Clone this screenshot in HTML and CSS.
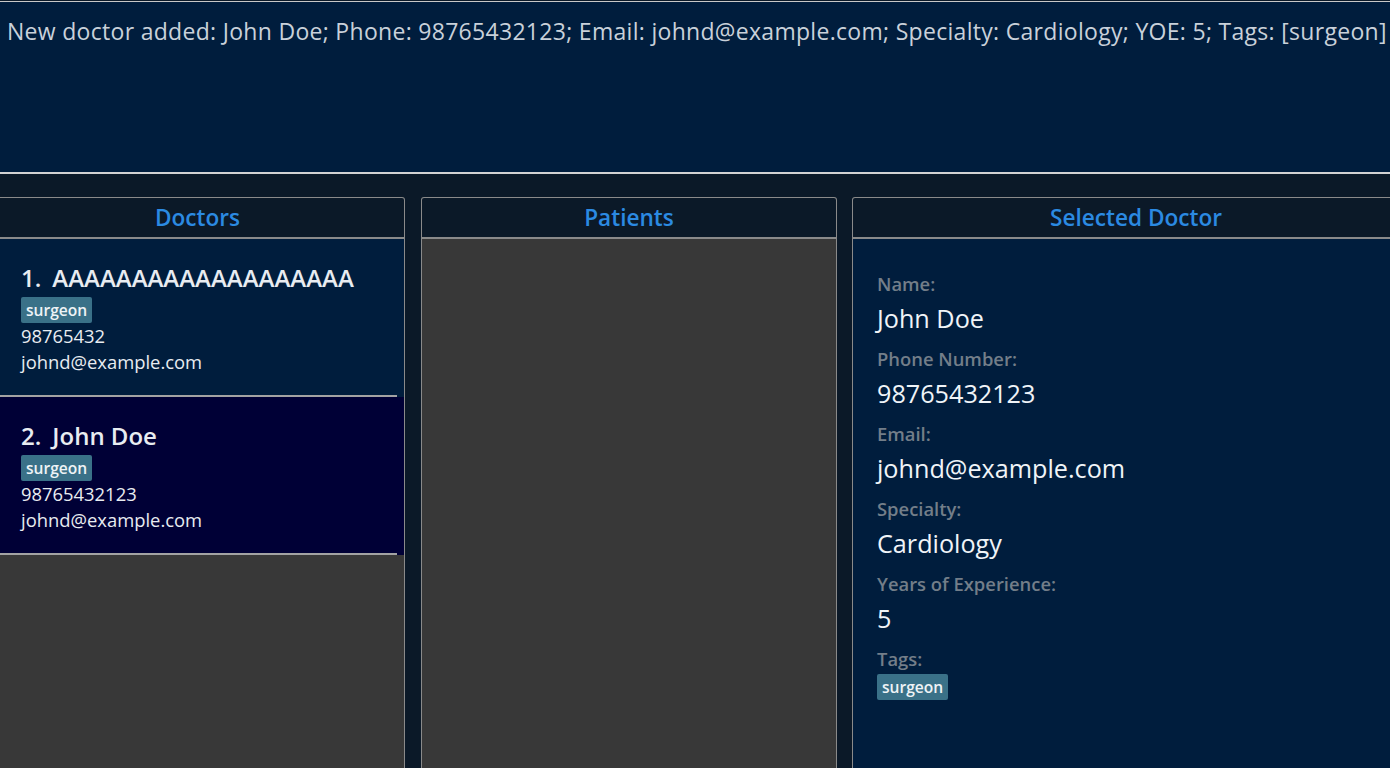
FILE: index.html
```html
<!DOCTYPE html>
<html>
<head>
<meta charset="utf-8">
<link rel="stylesheet" href="styles.css">
</head>
<body>
<div class="result">New doctor added: John Doe; Phone: 98765432123; Email: johnd@example.com; Specialty: Cardiology; YOE: 5; Tags: [surgeon]</div>
<div class="panels">
  <section class="panel doctors">
    <header class="panel-head">Doctors</header>
    <div class="panel-body list">
      <div class="card card-a">
        <div class="card-inner">
          <div class="name"><span class="idx">1.</span><span>AAAAAAAAAAAAAAAAAAA</span></div>
          <div class="tags"><span class="tag">surgeon</span></div>
          <div class="line">98765432</div>
          <div class="line">johnd@example.com</div>
        </div>
        <div class="sep"></div>
      </div>
      <div class="card card-b">
        <div class="card-inner">
          <div class="name"><span class="idx">2.</span><span>John Doe</span></div>
          <div class="tags"><span class="tag">surgeon</span></div>
          <div class="line">98765432123</div>
          <div class="line">johnd@example.com</div>
        </div>
        <div class="sep"></div>
      </div>
    </div>
  </section>
  <section class="panel patients">
    <header class="panel-head">Patients</header>
    <div class="panel-body grey"></div>
  </section>
  <section class="panel selected">
    <header class="panel-head">Selected Doctor</header>
    <div class="panel-body detail">
      <div class="field"><div class="label">Name:</div><div class="value">John Doe</div></div>
      <div class="field"><div class="label">Phone Number:</div><div class="value">98765432123</div></div>
      <div class="field"><div class="label">Email:</div><div class="value">johnd@example.com</div></div>
      <div class="field"><div class="label">Specialty:</div><div class="value">Cardiology</div></div>
      <div class="field"><div class="label">Years of Experience:</div><div class="value">5</div></div>
      <div class="field"><div class="label">Tags:</div><div class="tags"><span class="tag">surgeon</span></div></div>
    </div>
  </section>
</div>
</body>
</html>
```
FILE: styles.css
```css
html, body {
  margin: 0;
  padding: 0;
  background: #0b1928;
  overflow: hidden;
  height: 768px;
  font-family: "Open Sans", "Noto Sans", sans-serif;
}
.result {
  margin-top: 1px;
  box-sizing: content-box;
  border-top: 1px solid #c8c8c8;
  border-bottom: 2px solid #d2d2d2;
  background: #001d3d;
  color: #c9d1da;
  font-size: 23px;
  letter-spacing: 0.3px;
  line-height: 30px;
  padding: 14px 0 2px 7px;
  height: 154px;
  white-space: nowrap;
  overflow: hidden;
}
.panels {
  display: flex;
  margin-top: 23px;
  margin-left: -10px;
  height: 700px;
}
.panel {
  display: flex;
  flex-direction: column;
  flex: none;
}
.doctors { width: 415px; }
.patients { width: 416px; margin-left: 16px; }
.selected { width: 568px; margin-left: 15px; }
.panel-head {
  border: 1px solid #8a8a8a;
  border-bottom: 2px solid #8a8a8a;
  border-radius: 3px 3px 0 0;
  box-sizing: border-box;
  height: 42px;
  color: #2b8ae2;
  font-weight: 600;
  font-size: 22.6px;
  line-height: 39px;
  text-align: center;
  background: #0b1928;
}
.panel-body {
  flex: 1;
  border-left: 1px solid #8a8a8a;
  border-right: 1px solid #8a8a8a;
}
.grey { background: #383838; }
.list {
  background: #383838;
  display: flex;
  flex-direction: column;
}
.card {
  display: flex;
  flex-direction: column;
}
.card-a { background: #001d3d; }
.card-b { background: #000036; }
.card-inner {
  height: 156px;
  box-sizing: border-box;
  padding: 22px 0 0 30px;
  color: #e8ecf1;
}
.sep {
  height: 2px;
  background: #a3a3a3;
  margin-right: 7px;
}
.name {
  display: flex;
  gap: 11px;
  font-size: 24px;
  font-weight: 600;
  line-height: 34px;
}
.tags {
  display: flex;
  margin-top: 2px;
}
.tag {
  background: #3a7188;
  color: #eef3f6;
  font-weight: 600;
  font-size: 15.6px;
  line-height: 26px;
  padding: 0 5px;
  border-radius: 2px;
}
.line {
  font-size: 18.4px;
  line-height: 26px;
}
.detail {
  background: #001d3d;
  padding: 30px 0 0 24px;
}
.field {
  height: 75px;
}
.label {
  color: #737e89;
  font-weight: 600;
  font-size: 18.4px;
  line-height: 30px;
}
.value {
  color: #f0f4f8;
  font-size: 25.2px;
  line-height: 38px;
}
.field .tags { margin-top: 0; }
```
